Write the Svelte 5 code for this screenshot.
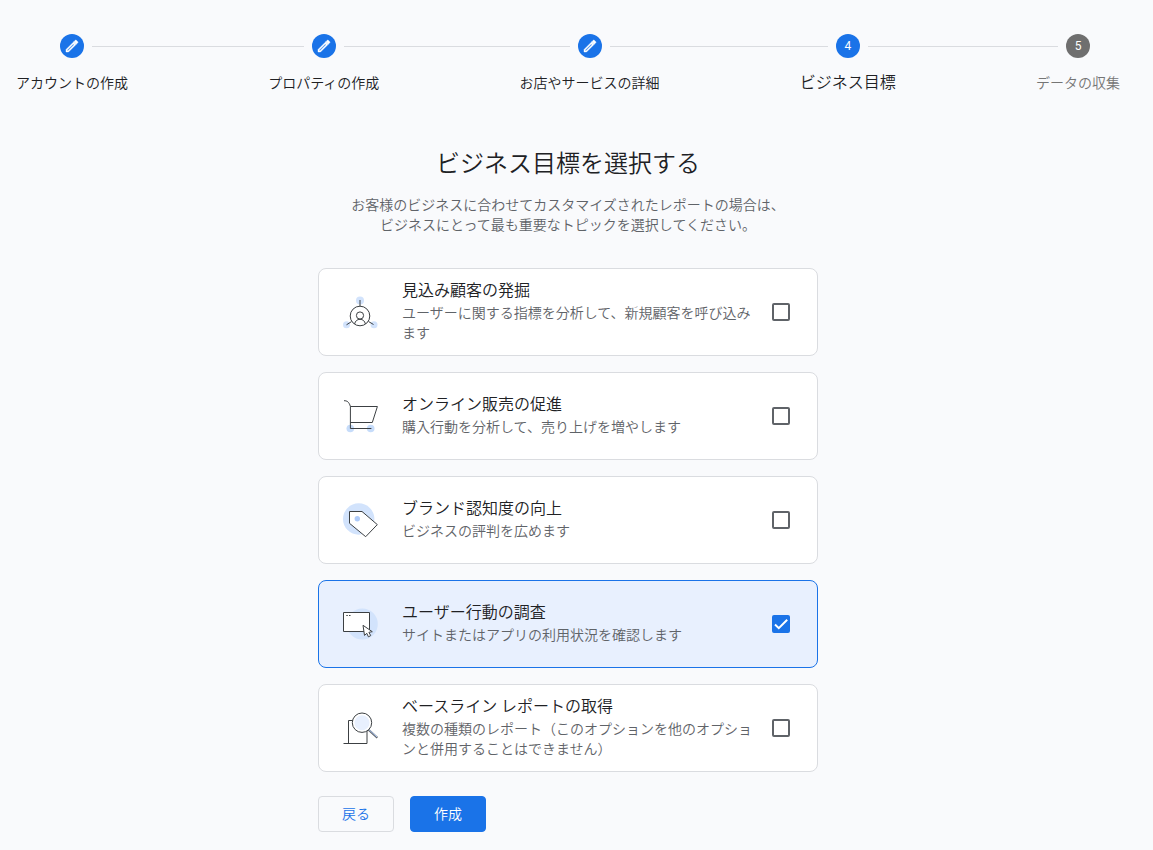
<script>
  let steps = [
    { label: "アカウントの作成", status: "done" },
    { label: "プロパティの作成", status: "done" },
    { label: "お店やサービスの詳細", status: "done" },
    { label: "ビジネス目標", status: "current" },
    { label: "データの収集", status: "todo" },
  ];

  let goals = [
    {
      id: "leads",
      title: "見込み顧客の発掘",
      text: "ユーザーに関する指標を分析して、新規顧客を呼び込みます",
      checked: false,
    },
    {
      id: "sales",
      title: "オンライン販売の促進",
      text: "購入行動を分析して、売り上げを増やします",
      checked: false,
    },
    {
      id: "brand",
      title: "ブランド認知度の向上",
      text: "ビジネスの評判を広めます",
      checked: false,
    },
    {
      id: "behavior",
      title: "ユーザー行動の調査",
      text: "サイトまたはアプリの利用状況を確認します",
      checked: true,
    },
    {
      id: "baseline",
      title: "ベースライン レポートの取得",
      text: "複数の種類のレポート（このオプションを他のオプションと併用することはできません）",
      checked: false,
    },
  ];

  // the baseline report can't be combined with the other goals
  function onToggle(goal) {
    if (!goal.checked) return;
    goals = goals.map((g) =>
      g.id !== goal.id && (goal.id === "baseline" || g.id === "baseline")
        ? { ...g, checked: false }
        : g
    );
  }
</script>

<div class="page">
  <ol class="stepper">
    {#each steps as step, i}
      {#if i > 0}
        <li class="connector" aria-hidden="true"></li>
      {/if}
      <li class="step {step.status}">
        <div class="marker">
          <span class="line" class:hidden={i === 0}></span>
          <span class="circle">
            {#if step.status === "done"}
              <svg width="16" height="16" viewBox="0 0 24 24" fill="#fff" stroke="#fff" stroke-width="0.6">
                <path
                  d="M3 17.25V21h3.75L17.81 9.94l-3.75-3.75L3 17.25zM5.92 19H5v-.92l9.06-9.06.92.92L5.92 19zM20.71 5.63l-2.34-2.34c-.2-.2-.45-.29-.71-.29s-.51.1-.7.29l-1.83 1.83 3.75 3.75 1.83-1.83c.39-.39.39-1.02 0-1.41z"
                />
                <path d="M14 6.2l3.8 3.8 1-1-3.8-3.8z" />
              </svg>
            {:else}
              {i + 1}
            {/if}
          </span>
          <span class="line" class:hidden={i === steps.length - 1}></span>
        </div>
        <span class="label">{step.label}</span>
      </li>
    {/each}
  </ol>

  <main>
    <h1>ビジネス目標を選択する</h1>
    <p class="intro">
      お客様のビジネスに合わせてカスタマイズされたレポートの場合は、<br />ビジネスにとって最も重要なトピックを選択してください。
    </p>

    <div class="goals">
      {#each goals as goal (goal.id)}
        <label class="card" class:selected={goal.checked}>
          <svg class="picture" width="36" height="36" viewBox="0 0 36 36" fill="none" stroke="#3c4043">
            {#if goal.id === "leads"}
              <g fill="#d2e3fc" stroke="none">
                <circle cx="18" cy="6.5" r="4" />
                <circle cx="4.5" cy="30.7" r="3.5" />
                <circle cx="32" cy="30.7" r="3.5" />
              </g>
              <circle cx="18" cy="22" r="9.8" />
              <circle cx="18" cy="21.5" r="3.6" />
              <path d="M18 6v6.2M4.5 30.8l5-3.2M31.5 30.5l-5-3M12.6 30c.6-3 2.6-4.7 5.4-4.7s4.8 1.7 5.4 4.7" />
            {:else if goal.id === "sales"}
              <g fill="#c6dcfa" stroke="none">
                <circle cx="8.3" cy="30.5" r="3.8" />
                <circle cx="28.7" cy="30.5" r="3.8" />
              </g>
              <path d="M2 2.7c3 0 5 1 6.4 5.8v22h21M8.4 8.5h27L30.3 24.5H8.4" />
            {:else if goal.id === "brand"}
              <circle cx="16.7" cy="17" r="15.7" fill="#d2e3fc" stroke="none" />
              <path d="M7.5 9.5H20L35.3 22.6L23.7 34.7L7.5 21.3z" fill="#fff" />
              <circle cx="15.3" cy="16.7" r="2.7" fill="#aecbfa" stroke="none" />
            {:else if goal.id === "behavior"}
              <circle cx="20.3" cy="18" r="15.5" fill="#d2e3fc" stroke="none" />
              <path d="M1.5 6.5h26v19h-26z" fill="#fff" />
              <path d="M4.3 9.5h1.5M7 9.5h1.5" />
              <path d="M21 19.3L22.5 29.4L24.8 27.3L26.4 30.8L28.7 29.6L26.9 26.3L30.3 25.7z" fill="#fff" />
            {:else}
              <path d="M1.5 33.5h23.5V20M6.5 33.5v-23h4.5" />
              <path d="M26.5 19.7L35.3 27.7" stroke="#5f6368" stroke-width="2" />
              <path d="M27 19.7L35 27" stroke="#aecbfa" />
              <circle cx="20" cy="12.7" r="9.7" fill="#fff" />
              <circle cx="20" cy="12.7" r="7.5" fill="#e8f0fe" stroke="none" />
            {/if}
          </svg>
          <span class="body">
            <span class="title">{goal.title}</span>
            <span class="text">{goal.text}</span>
          </span>
          <span class="check">
            <input type="checkbox" bind:checked={goal.checked} on:change={() => onToggle(goal)} />
            {#if goal.checked}
              <svg width="18" height="18" viewBox="0 0 18 18" fill="none" stroke="#fff" stroke-width="2">
                <path d="M3 9.5L6.8 13.2L15.2 4.8" />
              </svg>
            {/if}
          </span>
        </label>
      {/each}
    </div>

    <div class="actions">
      <button type="button">戻る</button>
      <button type="button" class="primary">作成</button>
    </div>
  </main>
</div>

<style>
  :global(body) {
    background: #f9fafc;
  }
  .page {
    box-sizing: border-box;
    padding: 34px 33px 18px 16px;
    color: #202124;
    font-family: Roboto, "Noto Sans CJK JP", sans-serif;
    font-size: 14px;
    font-weight: 350;
    line-height: 20px;
  }
  .stepper {
    display: flex;
    margin: 0;
    padding: 0;
    list-style: none;
  }
  .step {
    display: flex;
    flex-direction: column;
    gap: 15px;
    text-align: center;
    white-space: nowrap;
  }
  .marker {
    display: flex;
    align-items: center;
    gap: 8px;
  }
  .line {
    flex: 1;
    height: 1px;
    background: #dadce0;
  }
  .line.hidden {
    visibility: hidden;
  }
  .connector {
    flex: 1;
    height: 1px;
    margin-top: 12px;
    background: #dadce0;
  }
  .circle {
    display: flex;
    align-items: center;
    justify-content: center;
    width: 24px;
    height: 24px;
    border-radius: 50%;
    background: #1a73e8;
    color: #fff;
    font-size: 12px;
    font-weight: 400;
  }
  .current .label {
    font-size: 16px;
  }
  .todo .circle {
    background: #6f6f6f;
  }
  .todo .label {
    color: #757575;
  }
  main {
    max-width: 500px;
    margin: 55px auto 0;
  }
  h1 {
    margin: 0 0 15px;
    font-size: 24px;
    font-weight: inherit;
    line-height: 32px;
    text-align: center;
  }
  .intro {
    margin: 0 0 33px;
    color: #5f6368;
    text-align: center;
    white-space: nowrap;
  }
  .goals {
    display: flex;
    flex-direction: column;
    gap: 16px;
  }
  .card {
    box-sizing: border-box;
    display: flex;
    align-items: center;
    min-height: 88px;
    padding: 8px 27px 8px 23px;
    border: 1px solid #dadce0;
    border-radius: 8px;
    background: #fff;
    cursor: pointer;
  }
  .card.selected {
    border-color: #1a73e8;
    background: #e8f0fe;
  }
  .picture {
    flex: none;
  }
  .body {
    flex: 1;
    display: flex;
    flex-direction: column;
    margin: 0 14px 2px 24px;
  }
  .title {
    font-size: 16px;
    line-height: 24px;
  }
  .text {
    color: #5f6368;
  }
  .check {
    display: grid;
  }
  .check input,
  .check svg {
    grid-area: 1 / 1;
  }
  .check svg {
    pointer-events: none;
  }
  input {
    appearance: none;
    box-sizing: border-box;
    width: 18px;
    height: 18px;
    margin: 0;
    border: 2px solid #5f6368;
    border-radius: 2px;
    cursor: pointer;
  }
  input:checked {
    border-color: #1a73e8;
    background: #1a73e8;
  }
  .actions {
    display: flex;
    gap: 16px;
    margin-top: 24px;
  }
  button {
    height: 36px;
    padding: 0 23px;
    border: 1px solid #dadce0;
    border-radius: 4px;
    background: transparent;
    color: #1a73e8;
    font: inherit;
    cursor: pointer;
  }
  button.primary {
    border-color: #1a73e8;
    background: #1a73e8;
    color: #fff;
  }
</style>
